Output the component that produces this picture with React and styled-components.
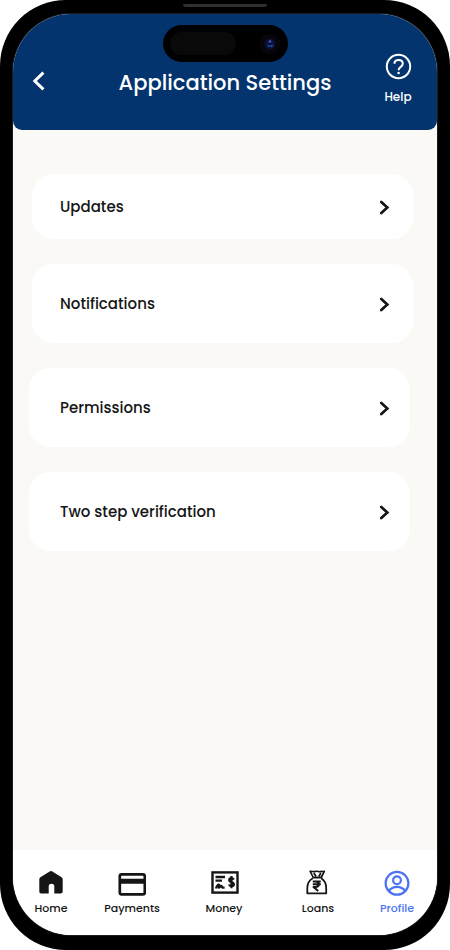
import React from "react";
import styled, { createGlobalStyle } from "styled-components";

const GlobalStyle = createGlobalStyle`
  *, *::before, *::after { box-sizing: border-box; }
  body {
    margin: 0;
    background: #ffffff;
    font-family: Poppins, Inter, "Open Sans", sans-serif;
  }
  button { font: inherit; color: inherit; background: none; border: 0; padding: 0; cursor: pointer; }
  a { text-decoration: none; }
  svg { display: block; flex: none; }
`;

const Device = styled.div`
  position: relative;
  display: flex;
  min-height: 100vh;
  padding: 14px 13px 15px;
  background: #000000;
  border-radius: 66px;
`;

const Speaker = styled.div`
  position: absolute;
  top: 4px;
  left: 50%;
  width: 84px;
  height: 3px;
  margin-left: -42px;
  border-radius: 0 0 3px 3px;
  background: #303030;
`;

const Island = styled.div`
  position: absolute;
  top: 25px;
  left: 50%;
  display: flex;
  align-items: center;
  justify-content: space-between;
  width: 125px;
  height: 37px;
  margin-left: -62px;
  padding: 0 7px;
  border-radius: 19px;
  background: #000000;
`;

const Sensor = styled.div`
  width: 66px;
  height: 23px;
  border-radius: 12px;
  background: #090909;
`;

const Screen = styled.div`
  flex: 1;
  min-width: 0;
  display: flex;
  flex-direction: column;
  overflow: hidden;
  border-radius: 58px;
  background: #faf9f5;
  box-shadow: 0 0 0 1px #1c1c1c;
`;

const Header = styled.header`
  display: grid;
  grid-template-columns: 78px 1fr 78px;
  height: 116px;
  padding-top: 38px;
  border-radius: 0 0 9px 9px;
  background: #03346e;
  color: #ffffff;
`;

const BackButton = styled.button`
  display: flex;
  align-items: center;
  height: 58px;
  padding-left: 19px;
`;

const Title = styled.h1`
  margin: 0;
  font-size: 21px;
  font-weight: 500;
  line-height: 62px;
  text-align: center;
  white-space: nowrap;
`;

const HelpButton = styled.button`
  display: flex;
  flex-direction: column;
  align-items: center;
  align-self: start;
  gap: 8px;
  font-size: 12px;
  font-weight: 500;
  line-height: 18px;
`;

const SettingsList = styled.main`
  flex: 1;
  display: flex;
  flex-direction: column;
  gap: 25px;
  padding: 44px 24px 24px 19px;
`;

const SettingRow = styled.button`
  display: flex;
  align-items: center;
  justify-content: space-between;
  height: ${(p) => (p.$compact ? 65 : 79)}px;
  margin: ${(p) => (p.$inset ? "0 3px 0 -3px" : "0")};
  padding: ${(p) => (p.$inset ? "0 20px 0 31px" : "0 23px 0 28px")};
  border-radius: 21px;
  background: #ffffff;
  color: #151515;
  font-size: 15px;
  font-weight: 500;
  line-height: 22px;
`;

const TabBar = styled.nav`
  display: grid;
  grid-template-columns: 72fr 90fr 94fr 94fr 64fr;
  height: 85px;
  padding: 19px 8px 0 2px;
  background: #ffffff;
`;

const Tab = styled.a`
  display: flex;
  flex-direction: column;
  align-items: center;
  gap: 3px;
  color: ${(p) => (p.$active ? "#4c73f5" : "#151515")};
  font-size: 11px;
  font-weight: 500;
  line-height: 16px;
`;

const Camera = () => (
  <svg width="22" height="22" viewBox="0 0 22 22" aria-hidden="true">
    <circle cx="11" cy="11" r="10.5" fill="#07050a" />
    <circle cx="11" cy="11" r="5.5" fill="#0d1033" />
    <circle cx="11" cy="11" r="4" fill="#07163f" />
    <circle cx="11" cy="8.5" r="1.3" fill="#5355b7" />
    <circle cx="9.8" cy="13" r="1.2" fill="#173c9c" />
    <circle cx="12.6" cy="13" r="1.2" fill="#244bb0" />
    <circle cx="11" cy="11" r="1" fill="#02071b" />
  </svg>
);

const BackIcon = () => (
  <svg width="14" height="20" viewBox="0 0 14 20" fill="none" stroke="currentColor" strokeWidth="3" aria-hidden="true">
    <path d="M11.4 1.7 2.8 10l8.6 8.300" />
  </svg>
);

const HelpIcon = () => (
  <svg width="28" height="28" viewBox="0 0 28 28" fill="none" stroke="currentColor" strokeWidth="2" aria-hidden="true">
    <circle cx="14.500" cy="14.500" r="11.700" />
    <path d="M10.400 11.800c0-2.400 1.700-3.900 4.200-3.900s4.200 1.500 4.200 3.700c0 3.500-4.200 3.100-4.200 6.700" />
    <circle cx="14.600" cy="21" r="1.300" fill="currentColor" stroke="none" />
  </svg>
);

const ChevronIcon = () => (
  <svg width="12" height="16" viewBox="0 0 12 16" fill="none" stroke="currentColor" strokeWidth="2.700" strokeLinecap="round" aria-hidden="true">
    <path d="M3.300 3l6 5.500-6 5.500" />
  </svg>
);

const HomeIcon = () => (
  <svg width="28" height="28" viewBox="0 0 28 28" aria-hidden="true">
    <path
      fill="currentColor"
      d="M13.100 2.300a1.700 1.700 0 0 1 1.800 0l9.300 5.600c.9.600 1.500 1.400 1.500 2.400v12.200c0 1.200-.8 2-2 2h-6.400v-7a2.800 2.800 0 0 0-5.600 0v7H4.300c-1.200 0-2-.8-2-2V10.300c0-1 .6-1.800 1.500-2.400z"
    />
  </svg>
);

const PaymentsIcon = () => (
  <svg width="28" height="28" viewBox="0 0 28 28" aria-hidden="true">
    <rect x="1.800" y="5.400" width="25" height="20" rx="1.800" fill="none" stroke="currentColor" strokeWidth="2.700" />
    <path fill="currentColor" d="M2 9.800h25v5H2z" />
  </svg>
);

const MoneyIcon = () => (
  <svg width="30" height="28" viewBox="0 0 30 28" fill="none" stroke="currentColor" aria-hidden="true">
    <rect x="3.500" y="3.400" width="25" height="20.200" strokeWidth="2.400" />
    <path d="M6.500 8h9.500M6.500 11.700h6.500" strokeWidth="2.300" />
    <path d="M7 19.500c.6-3 2.600-4.500 3.200-3.600.5.800-1.200 2.600-.2 2.700 1.200.1 1.800-2 2.600-1.600.7.400 0 1.600 1 1.600h2" strokeWidth="2.200" />
    <path d="M24.800 10.600c-.4-1-1.200-1.500-2.300-1.500-1.300 0-2.300.7-2.300 1.900 0 2.800 4.700 1.500 4.700 4.200 0 1.300-1 1.900-2.400 1.900-1.300 0-2.200-.5-2.500-1.600M22.500 7v12.200" strokeWidth="2.200" />
  </svg>
);

const LoansIcon = () => (
  <svg width="28" height="28" viewBox="0 0 28 28" fill="none" stroke="currentColor" strokeLinejoin="round" aria-hidden="true">
    <path d="M9 8 6.200 2.300c2-.3 3.100.6 4.400.3 1.300-.4 2.500-.6 3.800 0 1.300.6 2.800-.5 4.200-.1.800.2 1.300-.2 1.700-.1L17.500 8" strokeWidth="1.700" />
    <path d="M9.800 4l2.300 3.500M16.800 4l-1.900 3.500" strokeWidth="1.700" />
    <path d="M8.300 8.500h10" strokeWidth="2.200" />
    <path d="M8.800 9.300c-3.800 2.100-5.500 5.500-5.500 10v5h18.900v-5c0-4.500-1.600-7.900-5-10" strokeWidth="1.800" />
    <path d="M8.800 12.400h8M8.800 15.300h8M9.500 12.400h1.900c4.600 0 4.600 5.500 0 5.500H9.500l4.700 4" strokeWidth="2" />
  </svg>
);

const ProfileIcon = () => (
  <svg width="28" height="28" viewBox="0 0 28 28" fill="none" stroke="currentColor" strokeWidth="2.200" aria-hidden="true">
    <circle cx="14" cy="14.300" r="11.400" />
    <circle cx="14" cy="11.200" r="3.900" />
    <path d="M5.900 22c1.900-2.800 4.600-4.100 8.100-4.100s6.200 1.300 8.100 4.100" />
  </svg>
);

const settings = [
  { label: "Updates", compact: true },
  { label: "Notifications" },
  { label: "Permissions", inset: true },
  { label: "Two step verification", inset: true },
];

const tabs = [
  { label: "Home", Icon: HomeIcon },
  { label: "Payments", Icon: PaymentsIcon },
  { label: "Money", Icon: MoneyIcon },
  { label: "Loans", Icon: LoansIcon },
  { label: "Profile", Icon: ProfileIcon, active: true },
];

export default function App() {
  return (
    <>
      <GlobalStyle />
      <Device>
        <Screen>
          <Header>
            <BackButton type="button" aria-label="Back">
              <BackIcon />
            </BackButton>
            <Title>Application Settings</Title>
            <HelpButton type="button">
              <HelpIcon />
              Help
            </HelpButton>
          </Header>
          <SettingsList>
            {settings.map(({ label, compact, inset }) => (
              <SettingRow key={label} type="button" $compact={compact} $inset={inset}>
                {label}
                <ChevronIcon />
              </SettingRow>
            ))}
          </SettingsList>
          <TabBar aria-label="Main">
            {tabs.map(({ label, Icon, active }) => (
              <Tab key={label} href={`#${label.toLowerCase()}`} $active={active} aria-current={active ? "page" : undefined}>
                <Icon />
                {label}
              </Tab>
            ))}
          </TabBar>
        </Screen>
        <Speaker />
        <Island>
          <Sensor />
          <Camera />
        </Island>
      </Device>
    </>
  );
}
